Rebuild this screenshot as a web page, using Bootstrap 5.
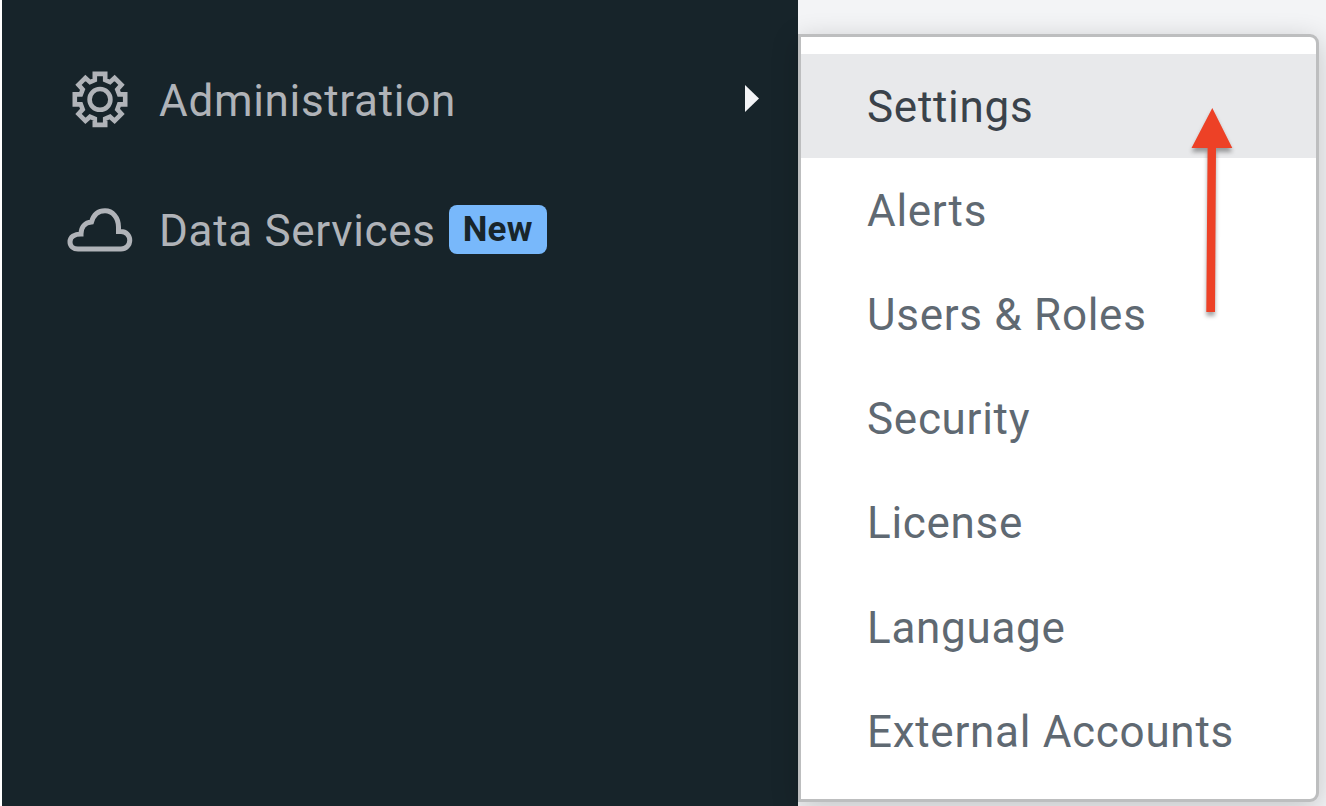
<!DOCTYPE html>
<html lang="en">
<head>
<meta charset="utf-8">
<meta name="viewport" content="width=device-width, initial-scale=1">
<title>Administration</title>
<link href="https://cdn.jsdelivr.net/npm/bootstrap@5.3.0/dist/css/bootstrap.min.css" rel="stylesheet">
<style>
body{background:#f3f4f6;font-family:Roboto,"Liberation Sans",sans-serif;font-size:44px;line-height:1}
.shell{height:806px;border-left:2px solid #fff}
.side{width:796px;background:#17242a;padding-top:35px}
.side-link{height:130px;color:#b0b3b8;letter-spacing:.68px;padding-left:65px;padding-right:39px}
.side-link:hover{color:#fff}
.side-icon{width:66px;height:66px;margin-right:26px;flex:none}
.side-text{padding-top:1px}
.new-tag{font-size:35px;font-weight:700;letter-spacing:.3px;color:#18252b;background:#78b8fb;border-radius:8px;width:98px;height:49px;margin:0 0 1px 13px;padding:0}
.flyout{width:521px;height:768px;margin-top:34px;background:#fff;background-clip:padding-box;border:3px solid #bdbebf;border-radius:0 9px 9px 0;padding:17px 0 15px;box-shadow:0 6px 28px rgba(0,0,0,.2)}
.fly-link{height:104.2px;flex:none;padding:1.6px 0 0 66px;color:#5f6972;letter-spacing:.71px;border:0;background:none}
.fly-link.current{background:#e8e9eb;color:#3a424a;height:104px}
.pointer{left:1180px;top:98px;filter:drop-shadow(0 4px 2px rgba(0,0,0,.35))}
</style>
</head>
<body class="overflow-hidden">
<div class="shell d-flex align-items-start">
  <nav class="side h-100 flex-shrink-0">
    <a href="#" class="side-link d-flex align-items-center text-decoration-none">
      <svg class="side-icon" viewBox="0 0 66 66" fill="none" stroke="#b0b3b8" stroke-width="4.6">
        <path d="M27.8 7.500H38.200V13.600L43 15.700L47.600 11.500L54.500 18.400L50.300 23L52.200 28H58.200V38H52.200L50.300 43L54.500 47.600L47.600 54.500L43 50.300L38.200 52.400V58.500H27.800V52.400L23 50.300L18.400 54.500L11.500 47.600L15.700 43L13.800 38H7.800V28H13.800L15.700 23L11.500 18.400L18.400 11.500L23 15.700L27.800 13.600Z" transform="translate(0 -.6)"/>
        <circle cx="33" cy="32.400" r="10.400"/>
      </svg>
      <span class="side-text">Administration</span>
      <svg class="ms-auto mb-1" width="14" height="28" viewBox="0 0 14 28"><path d="M0 1L14 14.500L0 28Z" fill="#f3f4f6"/></svg>
    </a>
    <a href="#" class="side-link d-flex align-items-center text-decoration-none">
      <svg class="side-icon" viewBox="0 0 66 66" fill="none" stroke="#b0b3b8" stroke-width="5">
        <path d="M11 52H54A8.700 8.700 0 0 0 54 34.500H51.500V30C51.500 20.300 45.500 13.800 38 13.800C31 13.800 26.500 18.100 24.500 25C18 25.500 14 30 14 37C7.500 37 3 40 3 45C3 49.200 6.500 52 11 52Z"/>
      </svg>
      <span class="side-text">Data Services</span>
      <span class="new-tag badge d-inline-flex align-items-center justify-content-center">New</span>
    </a>
  </nav>
  <div class="flyout list-group list-group-flush flex-shrink-0">
    <a href="#" class="fly-link current d-flex align-items-center text-decoration-none">Settings</a>
    <a href="#" class="fly-link d-flex align-items-center text-decoration-none">Alerts</a>
    <a href="#" class="fly-link d-flex align-items-center text-decoration-none">Users &amp; Roles</a>
    <a href="#" class="fly-link d-flex align-items-center text-decoration-none">Security</a>
    <a href="#" class="fly-link d-flex align-items-center text-decoration-none">License</a>
    <a href="#" class="fly-link d-flex align-items-center text-decoration-none">Language</a>
    <a href="#" class="fly-link d-flex align-items-center text-decoration-none">External Accounts</a>
  </div>
</div>
<svg class="pointer position-absolute" width="64" height="224" viewBox="0 0 64 224"><path d="M32.300 10L52.300 50H36L35 214H26.300L27.600 50H11.500Z" fill="#ed4126"/></svg>
<script src="https://cdn.jsdelivr.net/npm/bootstrap@5.3.0/dist/js/bootstrap.bundle.min.js"></script>
</body>
</html>
